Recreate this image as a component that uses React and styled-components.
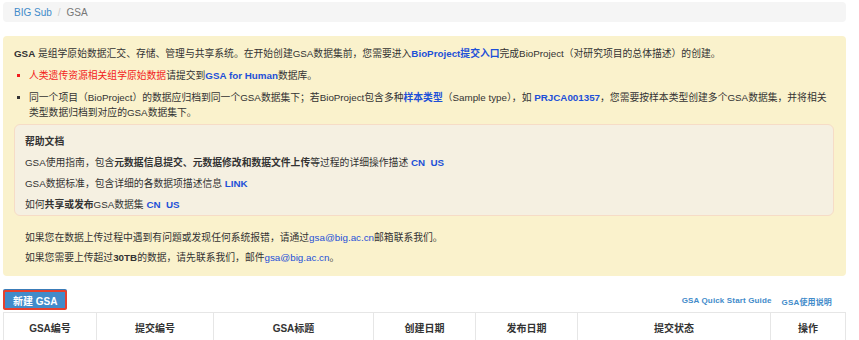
import React from "react";
import styled, { createGlobalStyle } from "styled-components";

const Global = createGlobalStyle`
  html, body { margin: 0; padding: 0; background: #fff; }
  body {
    font-family: "Liberation Sans", "Noto Sans CJK SC", sans-serif;
    font-size: 9.8px;
    color: #333;
  }
`;

const Page = styled.div`
  padding: 2px 13px 0 3px;
`;

const Breadcrumb = styled.nav`
  display: flex;
  align-items: center;
  padding: 0 11px;
  height: 20px;
  background: #f5f5f5;
  border-radius: 4px;
  font-size: 10px;
`;

const Crumb = styled.span`
  color: ${(p) => (p.$active ? "#777" : "#428bca")};
`;

const Sep = styled.span`
  color: #ccc;
  padding: 0 6px;
`;

const Alert = styled.div`
  margin-top: 14px;
  padding: 10px 12px 11px 11px;
  background: #faf2cc;
  border-radius: 4px;
  line-height: 15px;
`;

const P = styled.p`
  margin: ${(p) => p.$m || "0"};
`;

const Link = styled.a`
  color: #1d50d8;
  font-weight: ${(p) => (p.$plain ? "normal" : "bold")};
  text-decoration: none;
`;

const Red = styled.span`
  color: #f21c1c;
`;

const B = styled.b`
  font-weight: bold;
`;

const Bullets = styled.ul`
  margin: 0;
  padding: 0 0 0 15px;
  list-style: none;
`;

const Bullet = styled.li`
  position: relative;
  margin-top: 7px;
  &::before {
    content: "";
    position: absolute;
    left: -12px;
    top: 6px;
    width: 3px;
    height: 3px;
    background: ${(p) => (p.$red ? "#f21c1c" : "#333")};
  }
`;

const Well = styled.div`
  margin-top: 4px;
  padding: 9px 10px 3px;
  background: #f5f0e1;
  border: 1px solid #f6dcc6;
  border-radius: 6px;
`;

const WellTitle = styled.div`
  font-weight: bold;
`;

const WellLine = styled.p`
  margin: 6px 0 0;
`;

const Notes = styled.div`
  padding: 14px 11px 0;
`;

const Toolbar = styled.div`
  display: flex;
  align-items: center;
  justify-content: space-between;
  margin-top: 14px;
  height: 20px;
`;

const NewButton = styled.button`
  height: 20px;
  padding: 0 8px;
  background: #428bca;
  color: #fff;
  font-family: inherit;
  font-size: 10px;
  font-weight: bold;
  border: 2px solid #e8402e;
  border-radius: 2px;
  box-shadow: 0 -1px 0 #3a7cb8;
  cursor: pointer;
`;

const Guides = styled.div`
  display: flex;
  gap: 10px;
  padding-right: 14px;
  margin-top: 3px;
`;

const GuideLink = styled.a`
  color: #428bca;
  font-size: 8px;
  font-weight: bold;
  letter-spacing: 0.15px;
  text-decoration: none;
`;

const Table = styled.table`
  margin-top: 2px;
  width: 842px;
  border-collapse: collapse;
  table-layout: fixed;
`;

const Th = styled.th`
  height: 28px;
  padding: 0 8px;
  border: 1px solid #e6e6e6;
  border-bottom: none;
  font-size: 10px;
  font-weight: bold;
  text-align: center;
  color: #333;
`;

const columns = [
  ["GSA编号", 93],
  ["提交编号", 117],
  ["GSA标题", 160],
  ["创建日期", 102],
  ["发布日期", 102],
  ["提交状态", 193],
  ["操作", 75],
];

export default function App() {
  return (
    <>
      <Global />
      <Page>
        <Breadcrumb>
          <Crumb>BIG Sub</Crumb>
          <Sep>/</Sep>
          <Crumb $active>GSA</Crumb>
        </Breadcrumb>

        <Alert>
          <P>
            <B>GSA</B> 是组学原始数据汇交、存储、管理与共享系统。在开始创建GSA数据集前，您需要进入
            <Link>BioProject提交入口</Link>完成BioProject（对研究项目的总体描述）的创建。
          </P>
          <Bullets>
            <Bullet $red>
              <Red>人类遗传资源相关组学原始数据</Red>请提交到<Link>GSA for Human</Link>数据库。
            </Bullet>
            <Bullet>
              同一个项目（BioProject）的数据应归档到同一个GSA数据集下；若BioProject包含多种
              <Link>样本类型</Link>（Sample type），如 <Link>PRJCA001357</Link>
              ，您需要按样本类型创建多个GSA数据集，并将相关类型数据归档到对应的GSA数据集下。
            </Bullet>
          </Bullets>

          <Well>
            <WellTitle>帮助文档</WellTitle>
            <WellLine>
              GSA使用指南，包含<B>元数据信息提交、元数据修改和数据文件上传</B>等过程的详细操作描述{" "}
              <Link>CN</Link>&nbsp;&nbsp;<Link>US</Link>
            </WellLine>
            <WellLine>
              GSA数据标准，包含详细的各数据项描述信息 <Link>LINK</Link>
            </WellLine>
            <WellLine>
              如何<B>共享或发布</B>GSA数据集 <Link>CN</Link>&nbsp;&nbsp;<Link>US</Link>
            </WellLine>
          </Well>

          <Notes>
            <P>
              如果您在数据上传过程中遇到有问题或发现任何系统报错，请通过
              <Link $plain>gsa@big.ac.cn</Link>邮箱联系我们。
            </P>
            <P $m="5px 0 0">
              如果您需要上传超过<B>30TB</B>的数据，请先联系我们，邮件
              <Link $plain>gsa@big.ac.cn</Link>。
            </P>
          </Notes>
        </Alert>

        <Toolbar>
          <NewButton>新建 GSA</NewButton>
          <Guides>
            <GuideLink>GSA Quick Start Guide</GuideLink>
            <GuideLink>GSA使用说明</GuideLink>
          </Guides>
        </Toolbar>

        <Table>
          <colgroup>
            {columns.map(([n, w]) => (
              <col key={n} style={{ width: w }} />
            ))}
          </colgroup>
          <thead>
            <tr>
              {columns.map(([n]) => (
                <Th key={n}>{n}</Th>
              ))}
            </tr>
          </thead>
        </Table>
      </Page>
    </>
  );
}
